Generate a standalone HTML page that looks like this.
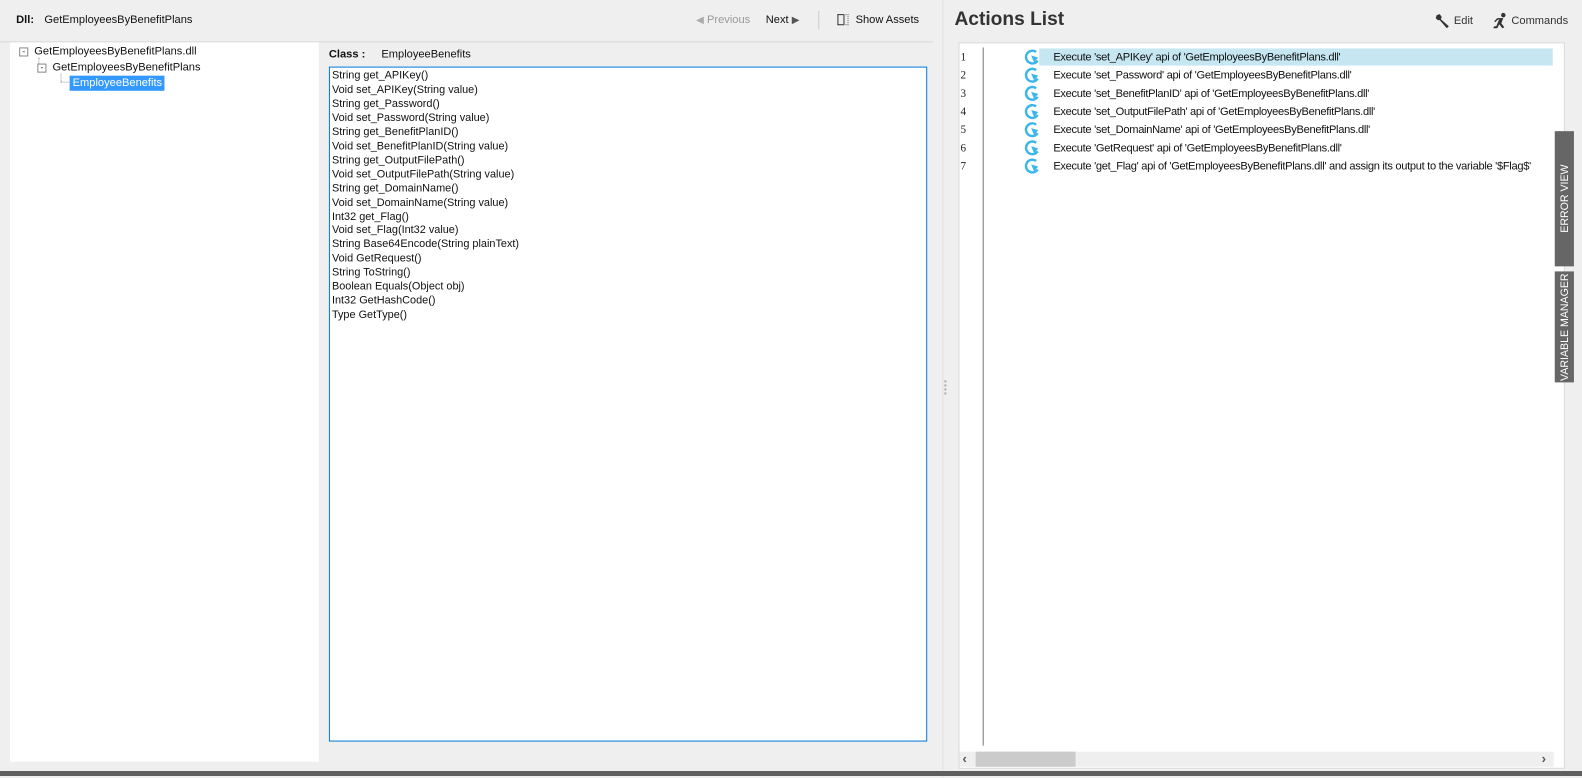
<!DOCTYPE html>
<html><head><style>
*{margin:0;padding:0;box-sizing:border-box}
body{width:1582px;height:776px;background:#efefef;font-family:"Liberation Sans",sans-serif;font-size:11px;color:#111;position:relative;overflow:hidden}
#w{position:absolute;left:0;top:0;width:1568px;height:770px;transform:scale(1.00893);transform-origin:0 0}
.a{position:absolute}
.tab{position:absolute;background:#666;color:#fff;display:flex;align-items:center;justify-content:center;overflow:hidden}
.tab span{writing-mode:vertical-rl;transform:rotate(180deg);white-space:nowrap;font-size:10.5px}
</style></head><body>
<div id="w">
<div class="a" style="left:16px;top:14px;font-weight:bold">Dll:</div>
<div class="a" style="left:44px;top:14px">GetEmployeesByBenefitPlans</div>
<div class="a" style="left:690px;top:14px;color:#999"><span style="color:#aaa;font-size:10px">◀</span> Previous</div>
<div class="a" style="left:759px;top:14px">Next <span style="color:#555;font-size:10px">▶</span></div>
<div class="a" style="left:811px;top:11px;width:1px;height:18px;background:#ccc"></div>
<div class="a" style="left:830px;top:14px;width:6px;height:11px;border:1px solid #333;border-right:none"></div>
<div class="a" style="left:836px;top:14px;width:5px;height:11px;border:1px dotted #666;border-left:1px solid #333"></div>
<div class="a" style="left:848px;top:14px">Show Assets</div>
<div class="a" style="left:0;top:41px;width:925px;height:1px;background:#d8d8d8"></div>
<div class="a" style="left:10px;top:42px;width:306px;height:713px;background:#fff"></div>
<div class="a" style="left:19px;top:47px;width:9px;height:9px;border:1px solid #888;background:#fff;font-size:9px;line-height:6px;text-align:center;color:#333">-</div>
<div class="a" style="left:34px;top:45px">GetEmployeesByBenefitPlans.dll</div>
<div class="a" style="left:38px;top:57px;width:1px;height:6px;border-left:1px dotted #999"></div>
<div class="a" style="left:37px;top:63px;width:9px;height:9px;border:1px solid #888;background:#fff;font-size:9px;line-height:6px;text-align:center;color:#333">-</div>
<div class="a" style="left:52px;top:61px">GetEmployeesByBenefitPlans</div>
<div class="a" style="left:60px;top:73px;width:8px;height:9px;border-left:1px dotted #999;border-bottom:1px dotted #999"></div>
<div class="a" style="left:69px;top:75px;width:94px;height:15px;background:#3399ff;color:#fff;padding:1px 3px">EmployeeBenefits</div>
<div class="a" style="left:326px;top:48px;font-weight:bold">Class :</div>
<div class="a" style="left:378px;top:48px">EmployeeBenefits</div>
<div class="a" style="left:326px;top:66px;width:593px;height:669px;background:#fff;border:1px solid #0078d7;padding:2px 2px;line-height:13.95px;font-size:10.8px">String get_APIKey()<br>Void set_APIKey(String value)<br>String get_Password()<br>Void set_Password(String value)<br>String get_BenefitPlanID()<br>Void set_BenefitPlanID(String value)<br>String get_OutputFilePath()<br>Void set_OutputFilePath(String value)<br>String get_DomainName()<br>Void set_DomainName(String value)<br>Int32 get_Flag()<br>Void set_Flag(Int32 value)<br>String Base64Encode(String plainText)<br>Void GetRequest()<br>String ToString()<br>Boolean Equals(Object obj)<br>Int32 GetHashCode()<br>Type GetType()</div>
<div class="a" style="left:934px;top:0;width:1px;height:771px;background:#e2e2e2"></div>
<div class="a" style="left:936px;top:377px;width:2px;height:14px;border-left:2px dotted #aaa"></div>
<div class="a" style="left:946px;top:9px;font-size:19px;font-weight:bold;color:#333">Actions List</div>
<svg class="a" style="left:1422px;top:13px" width="16" height="16" viewBox="0 0 16 16"><path d="M2 2 L5 1 L7 4 L6 6 L14 13 L12 15 L5 7 L3 7 L1 5 Z" fill="#333"/></svg>
<div class="a" style="left:1441px;top:15px;color:#333">Edit</div>
<svg class="a" style="left:1479px;top:12px" width="16" height="18" viewBox="0 0 16 18"><circle cx="11" cy="3" r="2.2" fill="#333"/><path d="M5 6 L11 6 L9 11 L12 15 L10 16 L7 12 L5 16 L1 16 L2 14 L4 14 L7 7 L5 8 L3 10 L2 9 Z" fill="#333"/></svg>
<div class="a" style="left:1498px;top:15px;color:#333">Commands</div>
<div class="a" style="left:950px;top:42px;width:601px;height:720px;background:#fff;border:1px solid #d8d8d8"></div>
<div class="a" style="left:974px;top:47px;width:1px;height:692px;background:#777"></div>
<div class="a" style="left:1030px;top:48px;width:509px;height:17px;background:#c6e6f1"></div>
<div class="a" style="left:952px;top:48px;font-family:'Liberation Serif',serif;font-size:11px;line-height:18px;color:#222">1<br>2<br>3<br>4<br>5<br>6<br>7</div>
<div class="a" style="left:1014px;top:48px">
<svg width="18" height="126" viewBox="0 0 18 126"><g fill="none" stroke="#3cb6ea" stroke-width="2.4">
<path d="M13 3.5 A6.3 6.3 0 1 0 14.5 12"/><path d="M13 21.5 A6.3 6.3 0 1 0 14.5 30"/><path d="M13 39.5 A6.3 6.3 0 1 0 14.5 48"/><path d="M13 57.5 A6.3 6.3 0 1 0 14.5 66"/><path d="M13 75.5 A6.3 6.3 0 1 0 14.5 84"/><path d="M13 93.5 A6.3 6.3 0 1 0 14.5 102"/><path d="M13 111.5 A6.3 6.3 0 1 0 14.5 120"/></g>
<g fill="#3cb6ea"><path d="M8 7 L15 9 L11 14 Z"/><path d="M8 25 L15 27 L11 32 Z"/><path d="M8 43 L15 45 L11 50 Z"/><path d="M8 61 L15 63 L11 68 Z"/><path d="M8 79 L15 81 L11 86 Z"/><path d="M8 97 L15 99 L11 104 Z"/><path d="M8 115 L15 117 L11 122 Z"/></g></svg></div>
<div class="a" style="left:1044px;top:48px;line-height:18px;letter-spacing:-0.3px">Execute 'set_APIKey' api of 'GetEmployeesByBenefitPlans.dll'<br>Execute 'set_Password' api of 'GetEmployeesByBenefitPlans.dll'<br>Execute 'set_BenefitPlanID' api of 'GetEmployeesByBenefitPlans.dll'<br>Execute 'set_OutputFilePath' api of 'GetEmployeesByBenefitPlans.dll'<br>Execute 'set_DomainName' api of 'GetEmployeesByBenefitPlans.dll'<br>Execute 'GetRequest' api of 'GetEmployeesByBenefitPlans.dll'<br>Execute 'get_Flag' api of 'GetEmployeesByBenefitPlans.dll' and assign its output to the variable '$Flag$'</div>
<div class="tab" style="left:1541px;top:130px;width:19px;height:134px"><span>ERROR VIEW</span></div>
<div class="tab" style="left:1541px;top:269px;width:19px;height:110px"><span>VARIABLE MANAGER</span></div>
<div class="a" style="left:951px;top:745px;width:589px;height:15px;background:#efefef"></div>
<div class="a" style="left:967px;top:745px;width:99px;height:15px;background:#cbcbcb"></div>
<div class="a" style="left:954px;top:744px;color:#555;font-weight:bold;font-size:13px">‹</div>
<div class="a" style="left:1528px;top:744px;color:#555;font-weight:bold;font-size:13px">›</div>
</div>
<div class="a" style="left:0;top:771px;width:1582px;height:5px;background:#5f5f5f"></div>
</body></html>
